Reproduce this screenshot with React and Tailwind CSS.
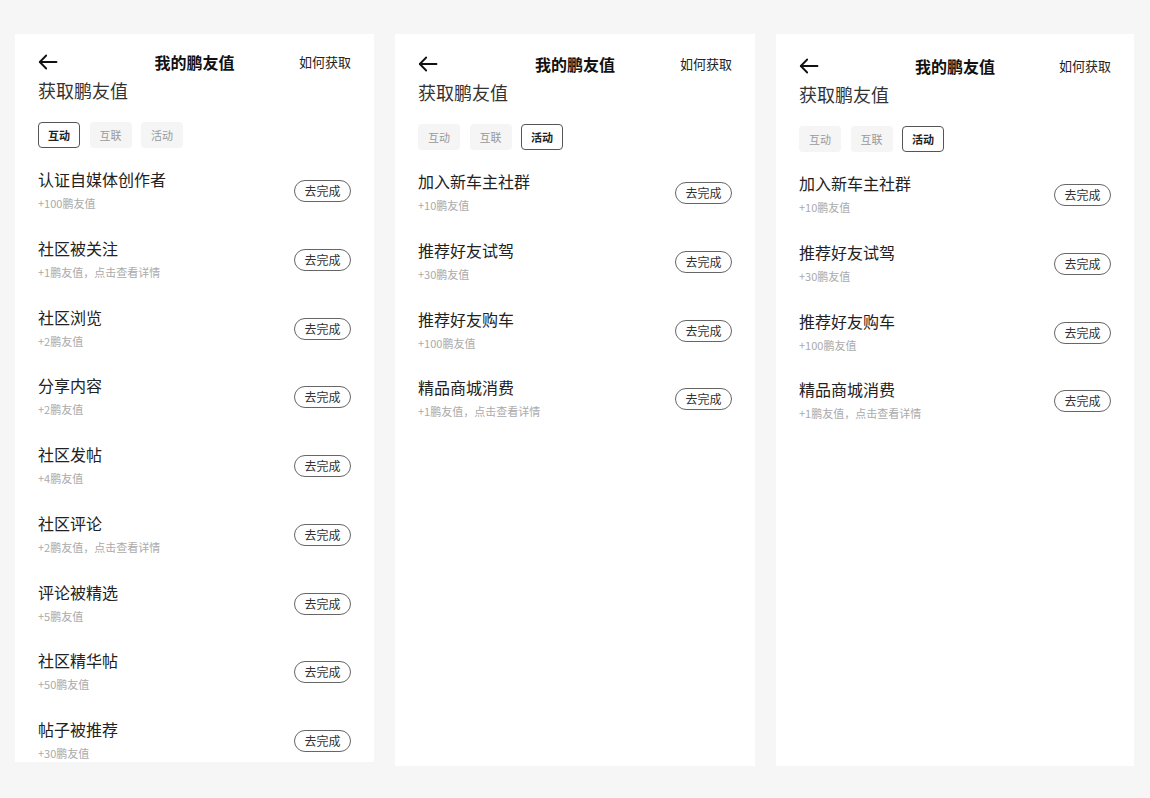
import { useState } from 'react';

const interactTasks = [
    { title: '认证自媒体创作者', sub: '+100鹏友值' },
    { title: '社区被关注', sub: '+1鹏友值，点击查看详情' },
    { title: '社区浏览', sub: '+2鹏友值' },
    { title: '分享内容', sub: '+2鹏友值' },
    { title: '社区发帖', sub: '+4鹏友值' },
    { title: '社区评论', sub: '+2鹏友值，点击查看详情' },
    { title: '评论被精选', sub: '+5鹏友值' },
    { title: '社区精华帖', sub: '+50鹏友值' },
    { title: '帖子被推荐', sub: '+30鹏友值' },
];

const activityTasks = [
    { title: '加入新车主社群', sub: '+10鹏友值' },
    { title: '推荐好友试驾', sub: '+30鹏友值' },
    { title: '推荐好友购车', sub: '+100鹏友值' },
    { title: '精品商城消费', sub: '+1鹏友值，点击查看详情' },
];

const tabs = ['互动', '互联', '活动'];

function ArrowBack() {
    return (
        <svg width="20" height="16" viewBox="0 0 20 16" fill="none" stroke="#111" strokeWidth="1.8" strokeLinecap="round" strokeLinejoin="round">
            <path d="M18.5 8H1.8" />
            <path d="M8.2 1.5L1.8 8l6.4 6.5" />
        </svg>
    );
}

function Panel({ initialTab, tasks, className }) {
    const [active, setActive] = useState(initialTab);

    return (
        <div className={`bg-white overflow-hidden px-[23px] ${className}`}>
            {/* Header */}
            <div className="grid grid-cols-3 items-center h-[24px]">
                <button className="flex items-center w-fit">
                    <ArrowBack />
                </button>
                <h1 className="text-center text-[16px] font-bold text-[#111] whitespace-nowrap">我的鹏友值</h1>
                <button className="justify-self-end text-[13px] text-[#222] whitespace-nowrap">如何获取</button>
            </div>

            <h2 className="mt-[4px] text-[18px] leading-[24px] text-[#333]">获取鹏友值</h2>

            {/* Tabs */}
            <div className="flex gap-[9.5px] mt-[20px]">
                {tabs.map((t) => (
                    <button
                        key={t}
                        onClick={() => setActive(t)}
                        className={`w-[42px] h-[26px] rounded-[4px] text-[11px] flex items-center justify-center ${active === t
                            ? 'border border-[#555] bg-white text-[#222] font-bold'
                            : 'bg-[#f5f5f5] text-[#999]'
                            }`}
                    >
                        {t}
                    </button>
                ))}
            </div>

            {/* Task list */}
            <div className="flex flex-col gap-[25.75px] mt-[20px]">
                {tasks.map((task) => (
                    <div key={task.title} className="flex items-center justify-between">
                        <div>
                            <p className="text-[16px] leading-[22px] text-[#222]">{task.title}</p>
                            <p className="mt-[5px] text-[11px] leading-[16px] text-[#aaa]">{task.sub}</p>
                        </div>
                        <button className="w-[57px] h-[22px] rounded-full border border-[#666] text-[12px] text-[#333] flex items-center justify-center mt-[3px]">
                            去完成
                        </button>
                    </div>
                ))}
            </div>
        </div>
    );
}

export default function App() {
    return (
        <div
            className="min-h-screen w-[1150px] h-[798px] bg-[#f6f6f6] flex items-start gap-[21px] pl-[15px] pt-[34px]"
            style={{ fontFamily: '"Noto Sans CJK SC", "Noto Sans", sans-serif' }}
        >
            <Panel initialTab="互动" tasks={interactTasks} className="w-[359px] h-[728px] pt-[16px]" />
            <Panel initialTab="活动" tasks={activityTasks} className="w-[360px] h-[732px] pt-[18px]" />
            <Panel initialTab="活动" tasks={activityTasks} className="w-[358px] h-[732px] pt-[20px]" />
        </div>
    );
}
